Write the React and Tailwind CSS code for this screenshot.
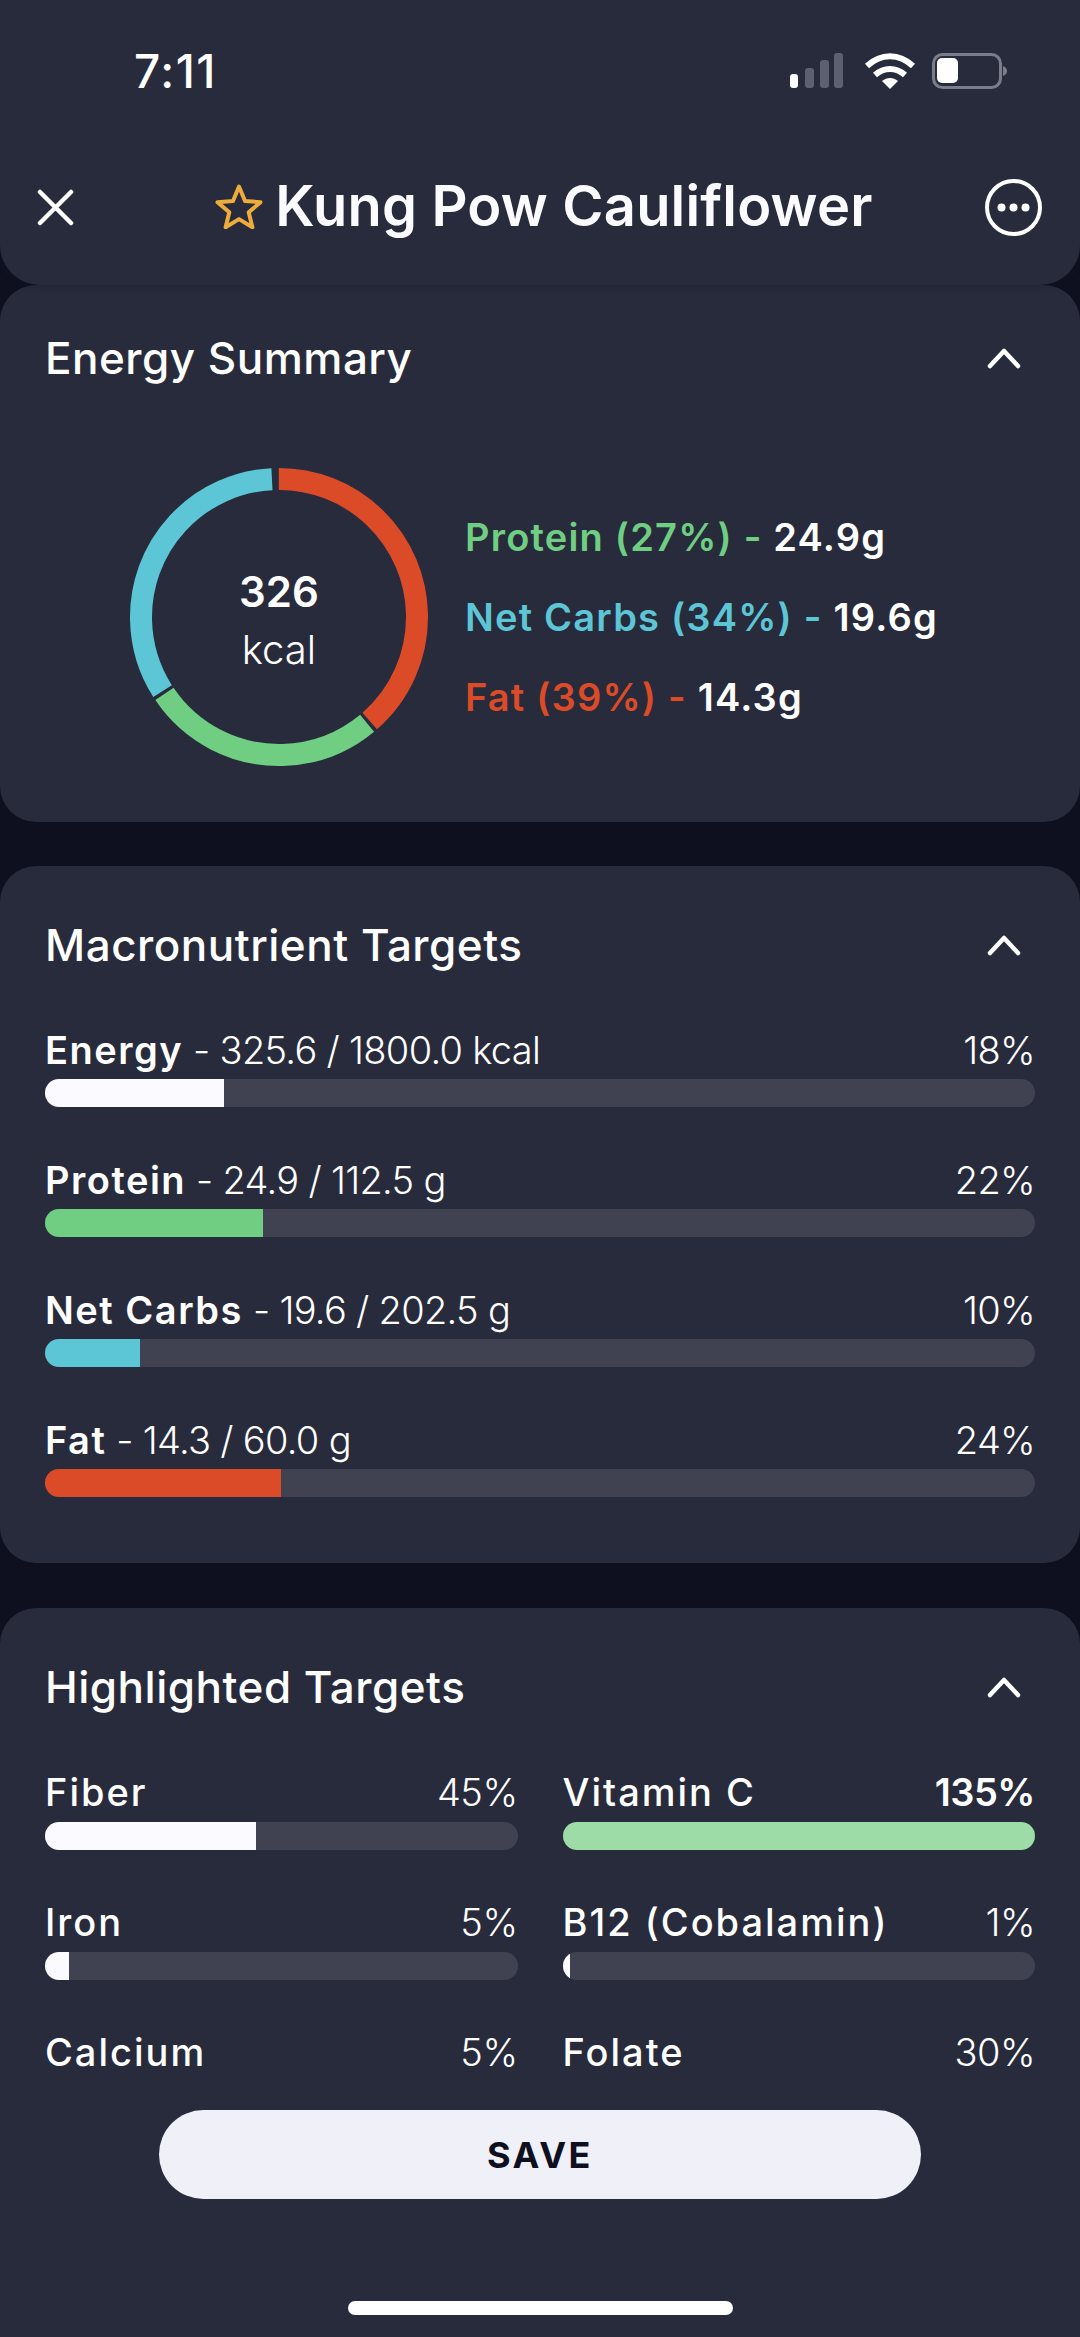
const MACROS = [
  { name: "Energy", detail: " - 325.6 / 1800.0 kcal", pct: "18%", fill: 179, color: "bg-[#fbfbff]" },
  { name: "Protein", detail: " - 24.9 / 112.5 g", pct: "22%", fill: 218, color: "bg-[#6fce82]" },
  { name: "Net Carbs", detail: " - 19.6 / 202.5 g", pct: "10%", fill: 95, color: "bg-[#5cc5d6]" },
  { name: "Fat", detail: " - 14.3 / 60.0 g", pct: "24%", fill: 236, color: "bg-[#dc4b28]" },
]

const TARGETS = [
  { name: "Fiber", pct: "45%", fill: 211, color: "bg-[#fbfbff]" },
  { name: "Vitamin C", pct: "135%", fill: 473, color: "bg-[#9ddca7]", bold: true },
  { name: "Iron", pct: "5%", fill: 24, color: "bg-[#fbfbff]" },
  { name: "B12 (Cobalamin)", pct: "1%", fill: 7, color: "bg-[#fbfbff]" },
  { name: "Calcium", pct: "5%", fill: 24, color: "bg-[#fbfbff]" },
  { name: "Folate", pct: "30%", fill: 142, color: "bg-[#fbfbff]" },
]

const SEGMENTS = [
  { color: "#dc4b28", start: 0.4, len: 38.6 },
  { color: "#6fce82", start: 39.4, len: 26.6 },
  { color: "#5cc5d6", start: 66.4, len: 33.2 },
]

function Chevron() {
  return (
    <svg width="34" height="22" viewBox="0 0 34 22" fill="none" stroke="#fff" strokeWidth="4.5" strokeLinecap="round" strokeLinejoin="round">
      <path d="M3 19 17 4l14 15" />
    </svg>
  )
}

function CardTitle({ children }) {
  return (
    <div className="flex h-12 items-center justify-between">
      <h2 className="text-[44px] leading-[48px] font-medium tracking-[0.5px] text-white">{children}</h2>
      <div className="mr-[14px]"><Chevron /></div>
    </div>
  )
}

function Bar({ fill, color, className }) {
  return (
    <div className={`h-7 overflow-hidden rounded-full bg-[#404252] ${className}`}>
      <div className={`h-full ${color}`} style={{ width: fill }} />
    </div>
  )
}

function StatusBar() {
  return (
    <div className="flex h-[125px] items-start justify-between pt-[44px] pl-[134px] pr-[73px]">
      <span className="text-[46px] leading-[54px] font-medium tracking-[1.5px] text-white">7:11</span>
      <svg className="mt-[9px]" width="217" height="38" viewBox="0 0 217 38" fill="none">
        <rect x="0" y="21" width="8" height="14" rx="3" fill="#fff" />
        <rect x="15" y="15" width="9" height="20" rx="3" fill="#5d6070" />
        <rect x="30" y="7" width="9" height="28" rx="3" fill="#5d6070" />
        <rect x="44" y="0" width="9" height="35" rx="3" fill="#5d6070" />
        <path d="M77 13c14-13 32-13 46 0" stroke="#fff" strokeWidth="6" />
        <path d="M85 22c9-8 21-8 30 0" stroke="#fff" strokeWidth="6" />
        <path d="M92 28c5-4 11-4 16 0l-8 8z" fill="#fff" />
        <rect x="143.500" y="1.500" width="67" height="33" rx="9" stroke="#7b7d8b" strokeWidth="3" />
        <rect x="147" y="5" width="21" height="25" rx="5" fill="#fff" />
        <path d="M213 13c3 1 4 3 4 5s-1 4-4 5z" fill="#7b7d8b" />
      </svg>
    </div>
  )
}

function Header() {
  return (
    <header className="relative z-10 h-[285px] rounded-b-[40px] bg-[#282b3b] shadow-[0_2px_6px_rgba(20,22,36,0.35)]">
      <StatusBar />
      <div className="grid grid-cols-[1fr_auto_1fr] items-center pl-[37px] pr-[38px] pt-[48px]">
        <svg className="justify-self-start" width="37" height="37" viewBox="0 0 37 37" stroke="#fff" strokeWidth="4.5" strokeLinecap="round">
          <path d="M3 3l31 31M34 3 3 34" />
        </svg>
        <div className="ml-[9px] flex items-center gap-[12px]">
          <svg className="mb-[3px]" width="48" height="46" viewBox="0 0 48 46" fill="none" stroke="#eeac3c" strokeWidth="4" strokeLinejoin="round">
            <path d="M24 3.500l6 14.500 15.500 1.200-11.800 10 3.700 15-13.400-8.100-13.400 8.100 3.700-15-11.800-10L18 18z" />
          </svg>
          <h1 className="mb-[2px] text-[56px] leading-[66px] font-semibold tracking-[0.2px] whitespace-nowrap text-[#fbfbff]">Kung Pow Cauliflower</h1>
        </div>
        <svg className="justify-self-end" width="57" height="57" viewBox="0 0 57 57" fill="#fff">
          <circle cx="28.500" cy="28.500" r="26.500" fill="none" stroke="#fff" strokeWidth="4" />
          <circle cx="16.500" cy="28.500" r="4" />
          <circle cx="28.500" cy="28.500" r="4" />
          <circle cx="40.500" cy="28.500" r="4" />
        </svg>
      </div>
    </header>
  )
}

function Donut() {
  return (
    <div className="relative h-[300px] w-[300px] shrink-0">
      <svg width="300" height="300" viewBox="0 0 300 300" fill="none">
        {SEGMENTS.map(s => (
          <circle
            key={s.color}
            cx="150"
            cy="150"
            r="138"
            stroke={s.color}
            strokeWidth="22"
            pathLength="100"
            strokeDasharray={`${s.len} ${100 - s.len}`}
            strokeDashoffset={-s.start}
            transform="rotate(-91.5 150 150)"
          />
        ))}
      </svg>
      <div className="absolute inset-0 flex flex-col items-center justify-center pt-[7px] text-white">
        <span className="text-[42px] leading-[58px] font-semibold">326</span>
        <span className="text-[40px] leading-[58px] font-light">kcal</span>
      </div>
    </div>
  )
}

function LegendRow({ label, value, color }) {
  return (
    <div className={`text-[38px] leading-[80px] font-semibold tracking-[1.2px] whitespace-nowrap ${color}`}>
      {label} - <span className="text-white">{value}</span>
    </div>
  )
}

function EnergySummary() {
  return (
    <section className="rounded-[36px] bg-[#282b3b] px-[45px] pt-[49px] pb-[55px]">
      <CardTitle>Energy Summary</CardTitle>
      <div className="mt-[85px] flex items-center pl-[84px]">
        <Donut />
        <div className="ml-[36px]">
          <LegendRow label="Protein (27%)" value="24.9g" color="text-[#6fce82]" />
          <LegendRow label="Net Carbs (34%)" value="19.6g" color="text-[#5cc5d6]" />
          <LegendRow label="Fat (39%)" value="14.3g" color="text-[#dc4b28]" />
        </div>
      </div>
    </section>
  )
}

function MacroTargets() {
  return (
    <section className="mt-[44px] rounded-[36px] bg-[#282b3b] px-[45px] pt-[55px] pb-[66px]">
      <CardTitle>Macronutrient Targets</CardTitle>
      <div className="mt-[59px] flex flex-col gap-[51px]">
        {MACROS.map(m => (
          <div key={m.name}>
            <div className="flex items-center justify-between text-[38px] leading-[44px] tracking-[-0.7px] text-white">
              <span>
                <span className="font-semibold tracking-[1.5px]">{m.name}</span>
                <span className="font-light">{m.detail}</span>
              </span>
              <span className="font-light">{m.pct}</span>
            </div>
            <Bar fill={m.fill} color={m.color} className="mt-[7px]" />
          </div>
        ))}
      </div>
    </section>
  )
}

function HighlightedTargets() {
  return (
    <section className="mt-[45px] rounded-[36px] bg-[#282b3b] px-[45px] pt-[55px] pb-[60px]">
      <CardTitle>Highlighted Targets</CardTitle>
      <div className="mt-[59px] grid grid-cols-2 gap-x-[45px] gap-y-[50px]">
        {TARGETS.map(t => (
          <div key={t.name}>
            <div className="flex items-center justify-between text-[38px] leading-[44px] text-white">
              <span className="font-medium tracking-[2px]">{t.name}</span>
              <span className={t.bold ? "font-semibold tracking-[-0.5px]" : "font-light tracking-[-0.5px]"}>{t.pct}</span>
            </div>
            <Bar fill={t.fill} color={t.color} className="mt-[8px]" />
          </div>
        ))}
      </div>
    </section>
  )
}

export default function App() {
  return (
    <div className="relative h-[2337px] w-[1080px] overflow-hidden bg-[#0e1020] font-['Inter',sans-serif]">
      <Header />
      <EnergySummary />
      <MacroTargets />
      <HighlightedTargets />

      {/* save bar sits over the scrolling list */}
      <div className="absolute inset-x-0 bottom-0 z-20 h-[267px] rounded-t-[36px] bg-[#282b3b]">
        <button type="button" className="mx-auto mt-[40px] block h-[89px] w-[762px] rounded-full bg-[#f0f0f9] text-[36px] font-bold tracking-[2.5px] text-[#0e1020]">
          SAVE
        </button>
        <div className="mx-auto mt-[102px] h-[14px] w-[385px] rounded-full bg-white" />
      </div>
    </div>
  )
}
